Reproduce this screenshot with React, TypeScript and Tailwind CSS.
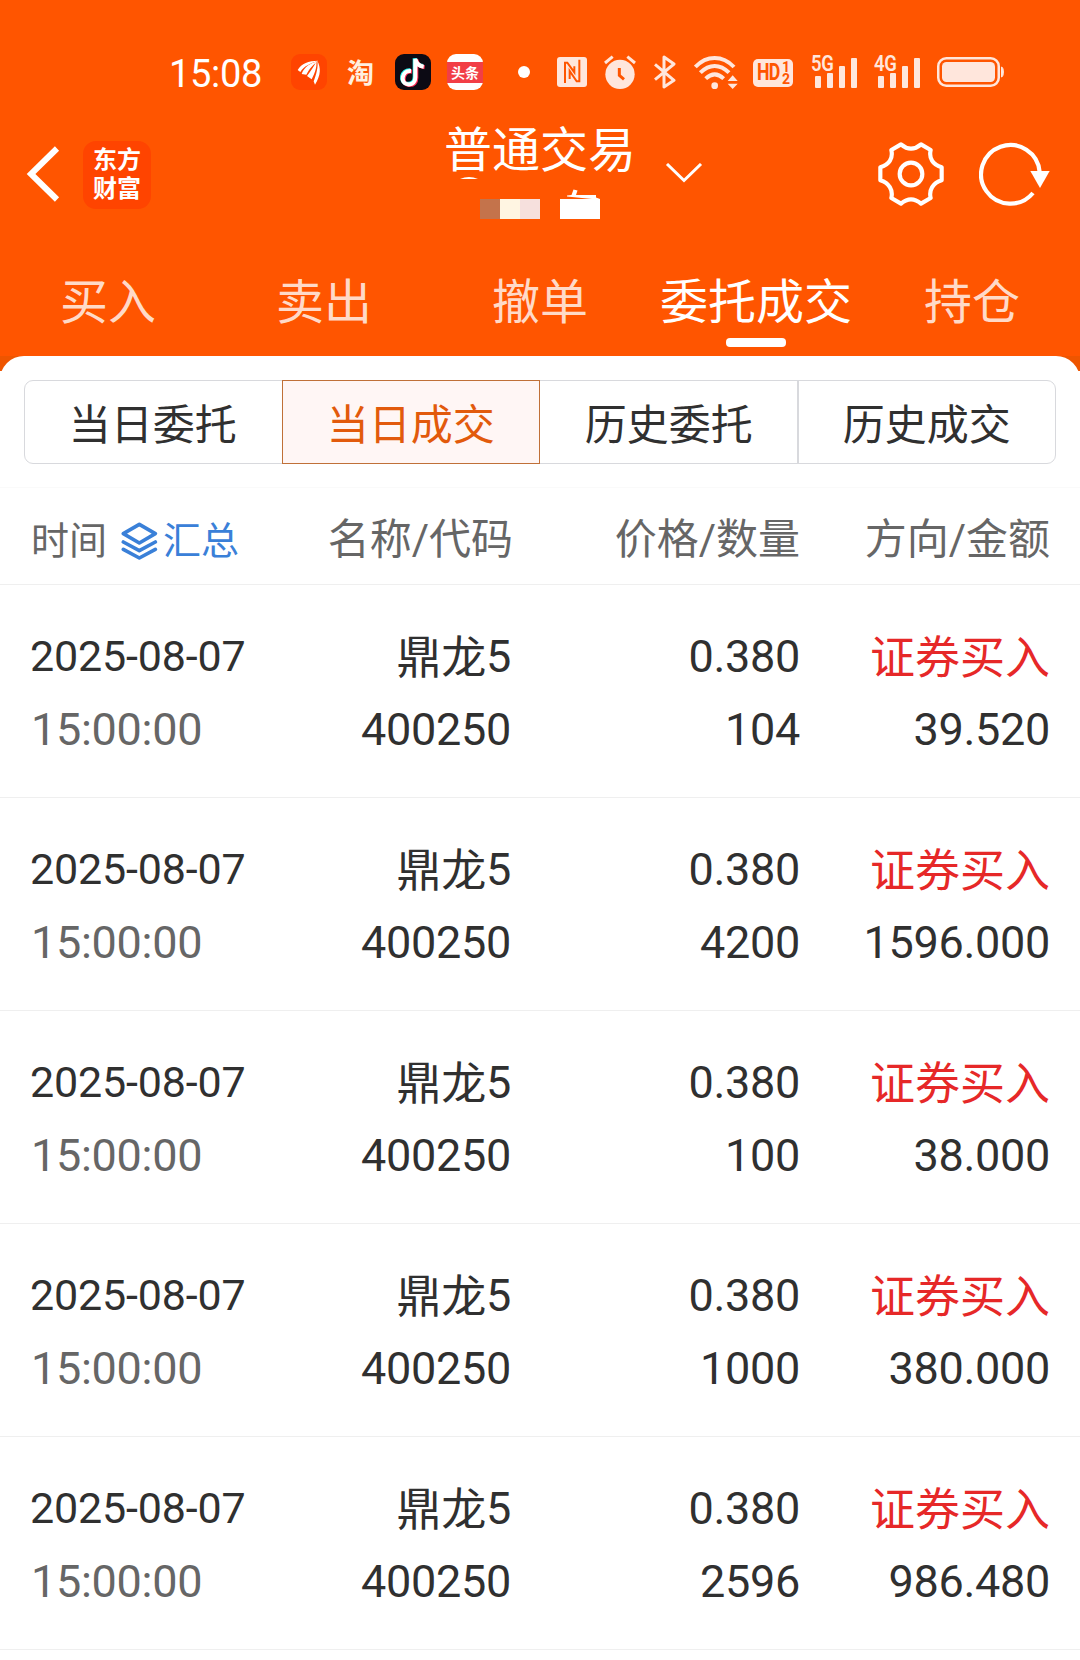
import React from 'react';

const tabs = ['买入', '卖出', '撤单', '委托成交', '持仓'];

const segments = ['当日委托', '当日成交', '历史委托', '历史成交'];

const trades = [
  { id: 1, date: '2025-08-07', time: '15:00:00', name: '鼎龙', code: '400250', price: '0.380', count: '104', side: '证券买入', amount: '39.520' },
  { id: 2, date: '2025-08-07', time: '15:00:00', name: '鼎龙', code: '400250', price: '0.380', count: '4200', side: '证券买入', amount: '1596.000' },
  { id: 3, date: '2025-08-07', time: '15:00:00', name: '鼎龙', code: '400250', price: '0.380', count: '100', side: '证券买入', amount: '38.000' },
  { id: 4, date: '2025-08-07', time: '15:00:00', name: '鼎龙', code: '400250', price: '0.380', count: '1000', side: '证券买入', amount: '380.000' },
  { id: 5, date: '2025-08-07', time: '15:00:00', name: '鼎龙', code: '400250', price: '0.380', count: '2596', side: '证券买入', amount: '986.480' }
];

const Signal = ({ label }: { label: string }) => (
  <div className="relative w-[47px] h-8">
    <span className="absolute left-0 -top-[2px] origin-left scale-x-[.84] text-[22px] leading-5 font-semibold tracking-[-0.5px]">{label}</span>
    <svg className="w-[47px] h-8" viewBox="0 0 47 32" fill="currentColor">
      <rect x="4" y="20" width="6" height="12" rx="1" />
      <rect x="16" y="17" width="6" height="15" rx="1" />
      <rect x="28" y="10" width="6" height="22" rx="1" />
      <rect x="40" y="2" width="6" height="30" rx="1" />
    </svg>
  </div>
);

const StatusBar = () => (
  <div className="flex items-center h-9 mt-[54px] pl-[169px] text-[#ffe6dc]">
    <span className="w-[122px] pt-[3px] text-[38px] leading-9 tracking-[-0.3px] text-white">15:08</span>

    <svg className="w-9 h-9 rounded-[9px] bg-[#ff4400]" viewBox="0 0 108 108">
      <path d="M20 48C32 28 52 20 82 20C58 28 38 36 28 54Z" fill="#fff" />
      <path d="M32 60C40 38 58 28 80 22C64 34 56 44 46 62Z" fill="#fff" />
      <path d="M48 66C58 54 70 36 76 22C78 36 74 54 62 76Z" fill="#fff" />
      <path d="M68 82C76 60 82 40 79 20C90 42 90 62 72 92Z" fill="#fff" />
    </svg>
    <span className="ml-5 w-8 pt-[3px] text-[27px] leading-9 font-bold text-[#fff0e0]">淘</span>

    <svg className="ml-4 w-9 h-9 rounded-[9px] bg-[#0c0a14]" viewBox="0 0 108 108" fill="none" strokeWidth="12">
      <path d="M46 49C18 46 12 86 36 89C52 91 59 81 59 68V13C62 27 71 34 84 36" stroke="#25f4ee" />
      <path d="M51 53C23 50 17 90 41 93C57 95 64 85 64 72V17C67 31 76 38 89 40" stroke="#fe2c55" />
      <path d="M48 51C20 48 14 88 38 91C54 93 61 83 61 70V15C64 29 73 36 86 38" stroke="#fff" />
    </svg>

    <div className="ml-4 flex w-9 h-9 flex-col justify-center rounded-[9px] bg-white">
      <span className="h-[21px] bg-[#f23e46] text-center text-[14px] leading-[22px] font-bold text-white">头条</span>
    </div>

    <div className="ml-[35px] w-3 h-3 rounded-full bg-white"></div>

    {/* NFC */}
    <svg className="ml-[27px] w-[30px] h-[30px]" viewBox="0 0 90 90">
      <rect width="90" height="90" rx="9" fill="currentColor" />
      <path d="M24 78V17H31L52 46V28M38 66V42L59 73H67V8" fill="none" stroke="#ff5500" strokeWidth="6" />
    </svg>

    {/* Alarm */}
    <svg className="ml-[17px] w-8 h-[34px]" viewBox="0 0 96 102">
      <circle cx="48" cy="58" r="44" fill="currentColor" />
      <path d="M3 24L26 5M93 24L70 5" stroke="currentColor" strokeWidth="9" />
      <path d="M46 39V61L60 73" fill="none" stroke="#ff5500" strokeWidth="9" />
    </svg>

    {/* Bluetooth */}
    <svg className="ml-[18px] w-[22px] h-[34px]" viewBox="0 0 66 102" fill="none" stroke="currentColor" strokeWidth="9">
      <path d="M3 28L60 76L30 96V6L60 27L3 74" strokeLinejoin="round" />
    </svg>

    {/* Wifi */}
    <svg className="ml-[18px] w-[45px] h-[35px]" viewBox="0 0 135 105" fill="none" stroke="currentColor" strokeWidth="12">
      <path d="M4 36C38 0 86 0 120 36M19 53C46 26 78 26 105 53M35 71C53 54 71 54 89 71" />
      <circle cx="62" cy="92" r="10" fill="currentColor" stroke="none" />
      <path d="M101 78L116 61L131 78ZM101 86L116 102L131 86Z" fill="currentColor" stroke="none" />
    </svg>

    {/* HD voice */}
    <div className="ml-[14px] mt-[2px] flex w-10 h-7 items-center rounded-[5px] bg-[#ffe6dc] pl-1 text-[#ff5500]">
      <span className="w-[25px] origin-left scale-x-[.77] text-[23px] leading-7 font-bold tracking-[-1px]">HD</span>
      <span className="flex flex-col text-[14px] leading-[12px] font-bold">
        <span>1</span>
        <span>2</span>
      </span>
    </div>

    <div className="ml-[18px]"><Signal label="5G" /></div>
    <div className="ml-4"><Signal label="4G" /></div>

    {/* Battery */}
    <svg className="ml-4 w-[67px] h-[30px]" viewBox="0 0 67 30">
      <rect x="1.25" y="1.25" width="60.5" height="27.5" rx="8" fill="none" stroke="currentColor" strokeWidth="2.5" />
      <rect x="5" y="5" width="53" height="20" rx="4.5" fill="currentColor" />
      <path d="M64.5 10C67 10 67 20 64.5 20Z" fill="currentColor" stroke="currentColor" />
    </svg>
  </div>
);

const NavBar = () => (
  <div className="flex h-[130px] pt-5">
    <svg className="ml-[26px] mt-[36px] w-[34px] h-[56px]" viewBox="0 0 34 56" fill="none" stroke="#fff" strokeWidth="6">
      <path d="M31 2.5L5 28L31 53.5" />
    </svg>
    <div className="ml-[23px] mt-[31px] flex w-[68px] h-[68px] flex-col items-center rounded-[13px] bg-[#ff4400] pt-[5px] text-[24px] leading-[29px] font-bold text-white">
      <span>东方</span>
      <span>财富</span>
    </div>

    <div className="ml-[293px] w-[192px]">
      <h1 className="mt-[12px] h-[54px] text-[48px] leading-[58px] text-white">普通交易</h1>
      {/* masked account name */}
      <svg className="w-[192px] h-[44px]" viewBox="444 176 192 44">
        <path d="M460 179Q469 175 478 179Z" fill="#fff" />
        <path d="M573.5 189.5L577.5 190.5L576 195H596V197.5L600 199H592L567 196.5V195.5L571.5 195Z" fill="#fff" />
        <rect x="480" y="199" width="20" height="20" fill="#c4734b" />
        <rect x="500" y="199" width="20" height="20" fill="#fff5e2" />
        <rect x="520" y="199" width="20" height="20" fill="#f6e0dd" />
        <rect x="560" y="199" width="40" height="20" fill="#fff" />
      </svg>
    </div>
    <svg className="ml-[29px] mt-[53px] w-[38px] h-5" viewBox="0 0 38 20" fill="none" stroke="#fff" strokeWidth="3">
      <path d="M2 1L19 17.5L36 1" />
    </svg>

    {/* Settings */}
    <svg className="ml-[175px] mt-[32px] w-[66px] h-[64px]" viewBox="112 96 198 192" fill="none" stroke="#fff" strokeWidth="12.5">
      <path d="M181 103L152 120C158 145 145 165 119 172V211C145 219 158 240 152 264L181 281Q211 255 241 281L270 264C264 240 277 219 303 211V172C277 165 264 145 270 120L241 103Q211 129 181 103Z" strokeLinejoin="round" />
      <circle cx="211" cy="192" r="34" />
    </svg>
    {/* Refresh */}
    <svg className="ml-[35px] mt-[32px] w-[71px] h-[64px]" viewBox="418 96 213 192" fill="none" stroke="#fff" strokeWidth="12.5">
      <path d="M580 249A88 88 0 1 1 600 186" />
      <path d="M572 183H630L601 234Z" fill="#fff" stroke="none" />
    </svg>
  </div>
);

const App = () => {
  return (
    <div className="flex h-[1660px] w-[1080px] flex-col overflow-hidden bg-white font-['Roboto','Noto_Sans_CJK_SC',sans-serif] text-[#303030]">
      <header className="flow-root h-[356px] shrink-0 bg-[#ff5500]">
        <StatusBar />
        <NavBar />
        <nav className="mt-[44px] grid grid-cols-5">
          {tabs.map((tab) => (
            <div key={tab} className="flex flex-col items-center">
              <span className={tab === '委托成交' ? 'h-[74px] text-[48px] leading-[77px] text-white' : 'text-[48px] leading-[77px] text-[#ffdac8]'}>
                {tab}
              </span>
              {tab === '委托成交' && <div className="w-[60px] h-[9px] rounded-[4px] bg-white"></div>}
            </div>
          ))}
        </nav>
      </header>

      <div className="h-[15px] shrink-0 overflow-hidden bg-[#ee5500]">
        <div className="h-12 rounded-t-[24px] bg-white"></div>
      </div>

      <div className="mx-6 mt-[9px] grid h-[84px] shrink-0 grid-cols-4 rounded-[9px] border border-[#d8d9dd]">
        {segments.map((segment, i) => (
          <div
            key={segment}
            className={
              i === 1
                ? '-my-px -ml-px h-[84px] border border-[#c07038] bg-[#fff6f5] text-center text-[42px] leading-[89px] text-[#e25a0c]'
                : i === 3
                  ? 'h-[82px] border-l-2 border-[#d8d9dd] -ml-px text-center text-[42px] leading-[90px]'
                  : i === 0
                    ? 'h-[82px] pr-[2px] text-center text-[42px] leading-[90px]'
                    : 'h-[82px] text-center text-[42px] leading-[90px]'
            }
          >
            {segment}
          </div>
        ))}
      </div>

      <div className="mt-[23px] grid h-[98px] shrink-0 grid-cols-[252px_231px_287px_250px] border-y border-t-[#fafafa] border-b-[#efefef] pl-[30px] text-right text-[42px] leading-[103px] text-[#666]">
        <div className="flex items-center text-[38px]">
          <span className="ml-px pt-[2px]">时间</span>
          <svg className="ml-[14px] w-[37px] h-[38px]" viewBox="0 0 111 114" fill="none" stroke="#3a80d8" strokeWidth="11" strokeLinejoin="round" strokeLinecap="round">
            <path d="M55 7L103 35L55 63L7 35ZM7 60L55 86L103 60M7 82L55 108L103 82" />
          </svg>
          <span className="ml-[5px] pt-[2px] text-[#3a80d8]">汇总</span>
        </div>
        <div>名称/代码</div>
        <div>价格/数量</div>
        <div>方向/金额</div>
      </div>

      {trades.map((trade) => (
        <div
          key={trade.id}
          className="grid h-[213px] shrink-0 grid-cols-[250px_231px_289px_250px] border-b border-[#efefef] pt-[35px] pl-[30px] text-right text-[45px] leading-[73px] tracking-[-0.3px]"
        >
          <div className="text-left">
            <p className="text-[43px] tracking-[-0.15px]">{trade.date}</p>
            <p className="pl-px text-[#666]">{trade.time}</p>
          </div>
          <div>
            <p className="flex justify-end">
              <span className="h-[73px] pt-[2px]">{trade.name}</span>
              <span>5</span>
            </p>
            <p>{trade.code}</p>
          </div>
          <div>
            <p>{trade.price}</p>
            <p>{trade.count}</p>
          </div>
          <div>
            <p className="h-[73px] pt-[2px] tracking-normal text-[#e62828]">{trade.side}</p>
            <p>{trade.amount}</p>
          </div>
        </div>
      ))}
    </div>
  );
};

export default App;
